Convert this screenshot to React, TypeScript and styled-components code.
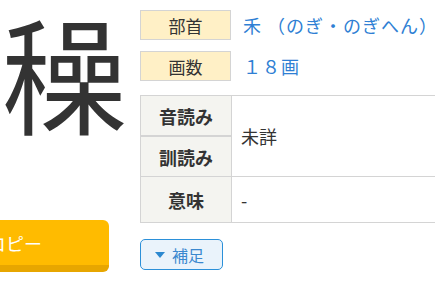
import React from "react";
import styled, { createGlobalStyle } from "styled-components";

const GlobalStyle = createGlobalStyle`
  body {
    margin: 0;
    overflow: hidden;
    background: #fff;
    color: #333;
    font-family: "Noto Sans CJK JP", "Noto Sans", sans-serif;
  }
`;

const Page = styled.div`
  display: flex;
  gap: 22px;
  width: 470px;
`;

const LeftColumn = styled.div`
  display: flex;
  flex-direction: column;
  width: 118px;
  flex-shrink: 0;
`;

const BigKanji = styled.div`
  margin: 8px 0 0 2px;
  font-size: 125px;
  line-height: 1;
  color: #333;
`;

const CopyButton = styled.button`
  margin-top: 87px;
  margin-left: -60px;
  width: 169px;
  height: 52px;
  display: flex;
  align-items: center;
  padding: 0 0 0 48px;
  border: none;
  border-bottom: 7px solid #e7a600;
  border-radius: 6px;
  background: #ffbb00;
  color: #fff;
  font-family: inherit;
  font-size: 18px;
  cursor: pointer;
`;

const RightColumn = styled.div`
  display: flex;
  flex-direction: column;
  align-items: flex-start;
  padding-top: 10px;
  width: 330px;
  flex-shrink: 0;
`;

const InfoRow = styled.div<{ $gap?: number }>`
  display: flex;
  align-items: center;
  gap: 12px;
  margin-top: ${(p) => p.$gap ?? 0}px;
`;

const Label = styled.div`
  box-sizing: border-box;
  width: 91px;
  height: 30px;
  display: flex;
  align-items: center;
  justify-content: center;
  background: #fff0c6;
  border: 1px solid #d4d4d4;
  font-size: 17px;
  color: #333;
`;

const Value = styled.div`
  font-size: 18px;
  letter-spacing: 1px;
  color: #2f7fd4;
`;

const ReadingTable = styled.div`
  margin-top: 14px;
  width: 330px;
  display: grid;
  grid-template-columns: 91px 1fr;
  grid-template-rows: 41px 40px 46px;
  border-top: 1px solid #d4d4d4;
  border-left: 1px solid #d4d4d4;
`;

const HeadCell = styled.div<{ $thick?: boolean }>`
  box-sizing: border-box;
  display: flex;
  align-items: center;
  justify-content: center;
  background: #f4f4f0;
  border-right: 1px solid #d4d4d4;
  border-bottom: ${(p) => (p.$thick ? 2 : 1)}px solid #d4d4d4;
  font-size: 18px;
  font-weight: 700;
  color: #333;
`;

const DataCell = styled.div<{ $span?: number }>`
  box-sizing: border-box;
  grid-row: span ${(p) => p.$span ?? 1};
  display: flex;
  align-items: center;
  padding-left: 9px;
  border-bottom: 1px solid #d4d4d4;
  font-size: 18px;
  color: #333;
`;

const ToggleButton = styled.button`
  margin-top: 16px;
  box-sizing: border-box;
  width: 83px;
  height: 31px;
  display: flex;
  align-items: center;
  gap: 7px;
  padding: 0 0 0 14px;
  background: #eaf3fb;
  border: 1px solid #2b90d9;
  border-radius: 5px;
  color: #3a88cf;
  font-family: inherit;
  font-size: 16px;
  cursor: pointer;
`;

const Caret = () => (
  <svg width="10" height="6" viewBox="0 0 10 6">
    <path d="M0 0H10L5 6Z" fill="#2b88d0" />
  </svg>
);

export default function App() {
  return (
    <>
      <GlobalStyle />
      <Page>
        <LeftColumn>
          <BigKanji>{"\u4186"}</BigKanji>
          <CopyButton>コピー</CopyButton>
        </LeftColumn>
        <RightColumn>
          <InfoRow>
            <Label>部首</Label>
            <Value>禾 （のぎ・のぎへん）</Value>
          </InfoRow>
          <InfoRow $gap={11}>
            <Label>画数</Label>
            <Value>１８画</Value>
          </InfoRow>
          <ReadingTable>
            <HeadCell $thick>音読み</HeadCell>
            <DataCell $span={2}>未詳</DataCell>
            <HeadCell>訓読み</HeadCell>
            <HeadCell>意味</HeadCell>
            <DataCell>-</DataCell>
          </ReadingTable>
          <ToggleButton>
            <Caret />
            補足
          </ToggleButton>
        </RightColumn>
      </Page>
    </>
  );
}
